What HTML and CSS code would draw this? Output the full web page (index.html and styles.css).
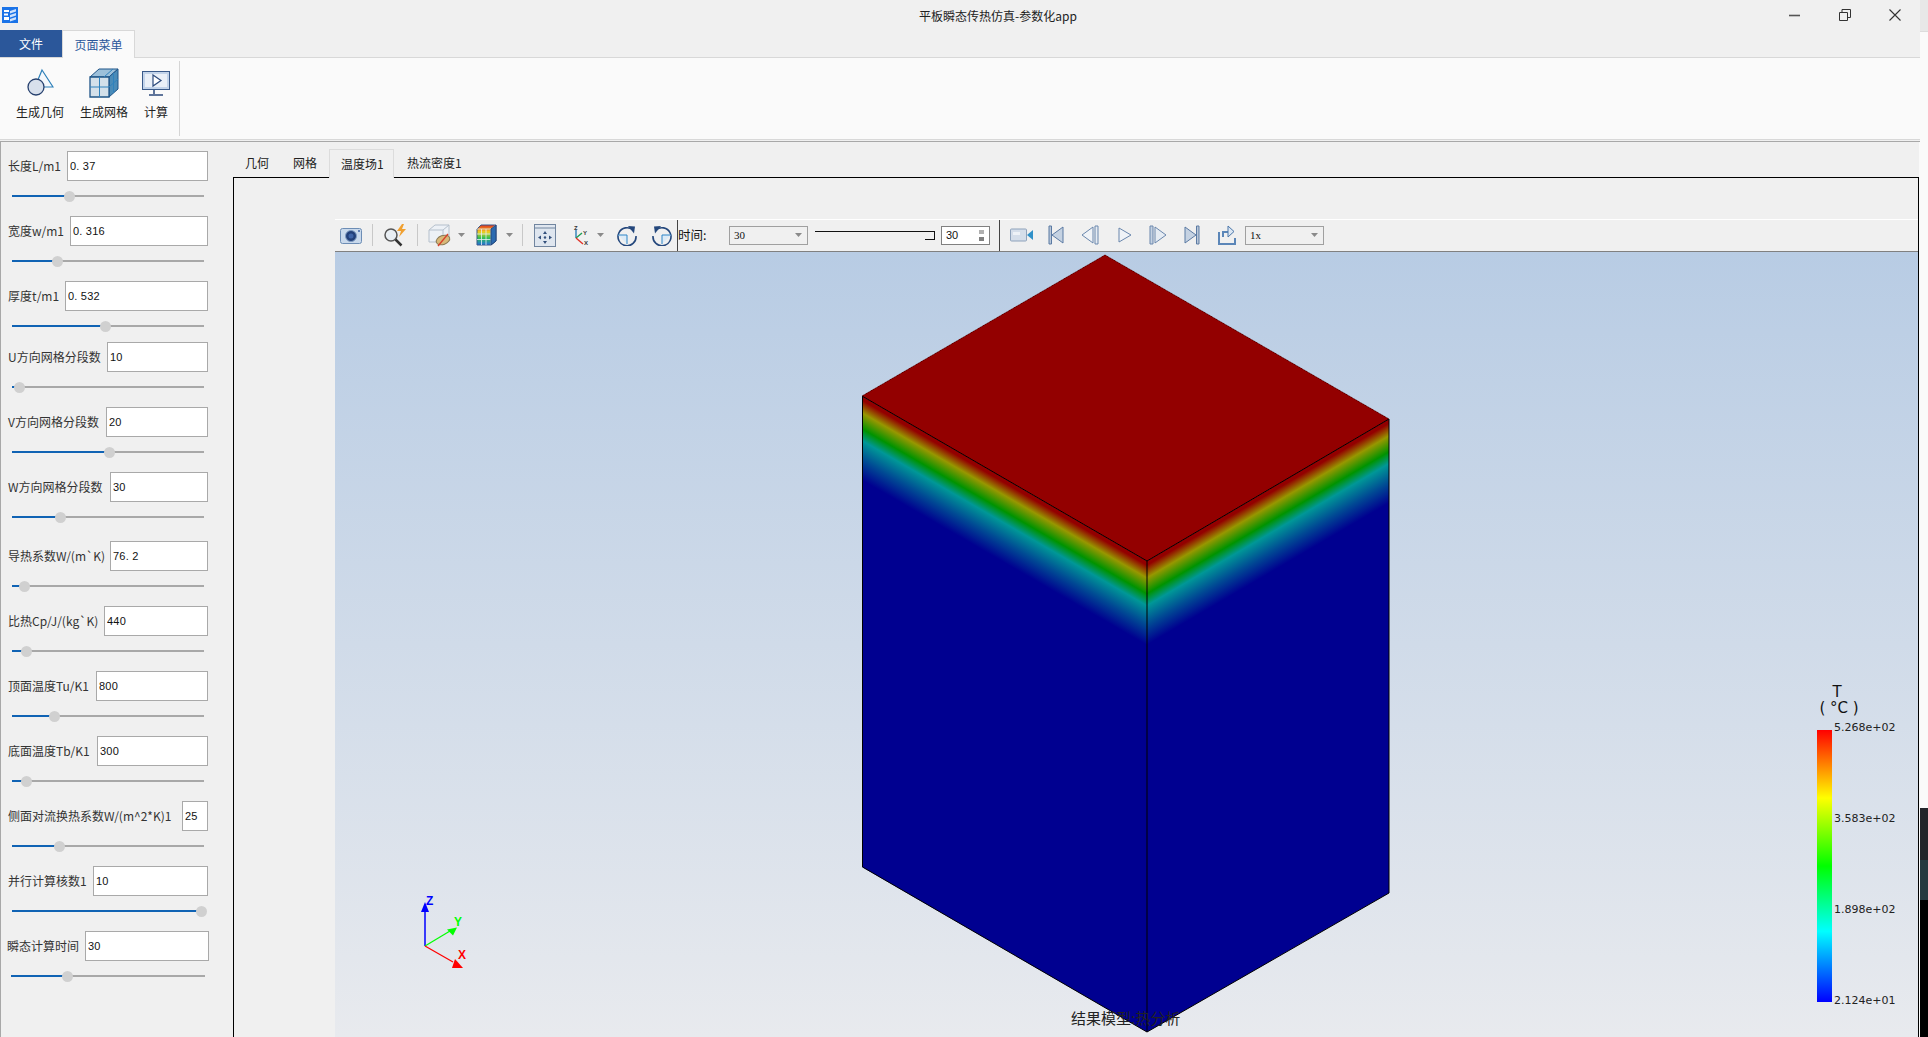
FILE: index.html
```html
<!DOCTYPE html>
<html lang="zh">
<head>
<meta charset="utf-8">
<title>平板瞬态传热仿真-参数化app</title>
<link rel="stylesheet" href="styles.css">
</head>
<body>
<div class="screen">
  <div class="window">
    <header class="titlebar">
      <svg class="app-icon" viewBox="0 0 16 16"><rect width="16" height="16" fill="#1a73e8"/><path d="M2 3h5v2H2zM2 6.500h4v2H2zM2 10h5v3H2z" fill="#fff"/><path d="M8 4l6-2v2.500l-6 2zM8 8l6-2v2.500l-6 2zM8 12l6-2v2.500l-6 2z" fill="#cfe2fb"/></svg>
      <div class="title">平板瞬态传热仿真-参数化app</div>
      <div class="winbtn"><svg viewBox="0 0 12 12" width="12" height="12"><path d="M0 6.500h11" stroke="#555" stroke-width="1.600"/></svg></div>
      <div class="winbtn"><svg viewBox="0 0 12 12" width="12" height="12"><path d="M.5 3.500h8v8h-8zM3 3.500V.5h8.500v8H8.500" fill="none" stroke="#333"/></svg></div>
      <div class="winbtn"><svg viewBox="0 0 12 12" width="12" height="12"><path d="M.5.500l11 11M11.500.5l-11 11" stroke="#333" stroke-width="1.100"/></svg></div>
    </header>

    <nav class="ribbon-tabs">
      <div class="file-tab">文件</div>
      <div class="page-tab">页面菜单</div>
    </nav>

    <section class="ribbon">
      <div class="rbtn">
        <svg class="ricon" width="28" height="30" viewBox="0 0 28 30"><path d="M16 2L27 19H9z" fill="#f4f8fc" stroke="#2c7fb8" stroke-width="1.200"/><circle cx="10" cy="19" r="8" fill="#d8e0ec" stroke="#26406e" stroke-width="1.300"/></svg>
        <span>生成几何</span>
      </div>
      <div class="rbtn">
        <svg class="ricon" width="30" height="30" viewBox="0 0 30 30"><path d="M1 9L10 1h19l-9 8z" fill="#9cc0da" stroke="#1f5588"/><path d="M20 9l9-8v20l-9 8z" fill="#4a8bb8" stroke="#1f5588"/><path d="M1 9h19v20H1z" fill="#d3e0ea" stroke="#1f5588" stroke-width="1.300"/><path d="M10.500 9v20M1 19h19M15 9l9-8M24.500 5v20M20 19l9-8" stroke="#2f82bd" fill="none"/></svg>
        <span>生成网格</span>
      </div>
      <div class="rbtn">
        <svg class="ricon icon-over" width="28" height="30" viewBox="0 0 28 30"><rect x=".5" y="3.500" width="27" height="18" fill="#c3d4ea" stroke="#3a5a8a"/><rect x="3" y="6" width="22" height="13" fill="#eaf0f8"/><path d="M11 7l8 5.500-8 5.500z" fill="#fff" stroke="#2c4a7c" stroke-width="1.200"/><path d="M12 22v4M7 27h14" stroke="#2c4a7c" stroke-width="1.500"/></svg>
        <span>计算</span>
      </div>
      <div class="ribbon-sep"></div>
    </section>

    <div class="workspace">
      <aside class="panel">
        <div class="param">
          <div class="field"><label>长度L/m1</label><input class="w-141" value="0. 37"></div>
          <div class="slider"><div class="fill" style="width:29.7%"></div><div class="knob" style="left:29.7%"></div></div>
        </div>
        <div class="param">
          <div class="field"><label>宽度w/m1</label><input class="w-138" value="0. 316"></div>
          <div class="slider"><div class="fill" style="width:23.4%"></div><div class="knob" style="left:23.4%"></div></div>
        </div>
        <div class="param short">
          <div class="field"><label>厚度t/m1</label><input class="w-143" value="0. 532"></div>
          <div class="slider"><div class="fill" style="width:48.4%"></div><div class="knob" style="left:48.4%"></div></div>
        </div>
        <div class="param">
          <div class="field"><label>U方向网格分段数</label><input class="w-101" value="10"></div>
          <div class="slider"><div class="fill" style="width:3.6%"></div><div class="knob" style="left:3.6%"></div></div>
        </div>
        <div class="param">
          <div class="field"><label>V方向网格分段数</label><input class="w-102" value="20"></div>
          <div class="slider"><div class="fill" style="width:50.5%"></div><div class="knob" style="left:50.5%"></div></div>
        </div>
        <div class="param tall">
          <div class="field"><label>W方向网格分段数</label><input class="w-98" value="30"></div>
          <div class="slider"><div class="fill" style="width:25%"></div><div class="knob" style="left:25%"></div></div>
        </div>
        <div class="param">
          <div class="field"><label>导热系数W/(m`K)</label><input class="w-98" value="76. 2"></div>
          <div class="slider"><div class="fill" style="width:6.3%"></div><div class="knob" style="left:6.3%"></div></div>
        </div>
        <div class="param">
          <div class="field"><label>比热Cp/J/(kg`K)</label><input class="w-104" value="440"></div>
          <div class="slider"><div class="fill" style="width:7.3%"></div><div class="knob" style="left:7.3%"></div></div>
        </div>
        <div class="param">
          <div class="field"><label>顶面温度Tu/K1</label><input class="w-112" value="800"></div>
          <div class="slider"><div class="fill" style="width:21.9%"></div><div class="knob" style="left:21.9%"></div></div>
        </div>
        <div class="param">
          <div class="field"><label>底面温度Tb/K1</label><input class="w-111" value="300"></div>
          <div class="slider"><div class="fill" style="width:7.3%"></div><div class="knob" style="left:7.3%"></div></div>
        </div>
        <div class="param">
          <div class="field"><label>侧面对流换热系数W/(m^2*K)1</label><input class="w-26" value="25"></div>
          <div class="slider"><div class="fill" style="width:24.5%"></div><div class="knob" style="left:24.5%"></div></div>
        </div>
        <div class="param">
          <div class="field"><label>并行计算核数1</label><input class="w-115" value="10"></div>
          <div class="slider"><div class="fill" style="width:98.4%"></div><div class="knob" style="left:98.4%"></div></div>
        </div>
        <div class="param wide">
          <div class="field"><label>瞬态计算时间</label><input class="w-124" value="30"></div>
          <div class="slider"><div class="fill" style="width:28.9%"></div><div class="knob" style="left:28.9%"></div></div>
        </div>
      </aside>

      <main class="main">
        <div class="view-tabs">
          <div class="view-tab">几何</div>
          <div class="view-tab">网格</div>
          <div class="view-tab active">温度场1</div>
          <div class="view-tab">热流密度1</div>
        </div>
        <div class="frame">
          <div class="toolbar">
            <svg class="tool ml-5" width="22" height="18" viewBox="0 0 22 18"><rect x=".5" y="2.500" width="21" height="15" rx="2" fill="#c9d9ec" stroke="#6d8db5"/><circle cx="11" cy="10" r="5.500" fill="#23407a" stroke="#7f9cc2"/><circle cx="11" cy="10" r="2.500" fill="#3f64a8"/><circle cx="19" cy="5" r="1" fill="#3f64a8"/></svg>
            <div class="tsep ml-10"></div>
            <svg class="tool ml-10" width="24" height="24" viewBox="0 0 24 24"><circle cx="8" cy="12" r="6" fill="#e9eef3" stroke="#555" stroke-width="1.500"/><path d="M12.500 16.500l6 6" stroke="#333" stroke-width="2.500"/><path d="M19 1l-5 7h4l-2 6 7-8h-4l2-5z" fill="#f0a030"/></svg>
            <div class="tsep ml-10"></div>
            <svg class="tool ml-10" width="23" height="24" viewBox="0 0 23 24"><path d="M1 7l6-5h14v12l-6 5H1z" fill="#edf1f6" stroke="#b5c0cc"/><path d="M1 7h14v12M15 7l6-5" fill="none" stroke="#b5c0cc"/><ellipse cx="15" cy="17" rx="7" ry="4.500" fill="#d8b878" stroke="#8a7a55" transform="rotate(-20 15 17)"/><path d="M10 23L20 11" stroke="#d8402a" stroke-width="1.300"/></svg>
            <div class="caret ml-7"></div>
            <svg class="tool ml-11" width="21" height="22" viewBox="0 0 21 22"><defs><linearGradient id="rb" x1="0" y1="0" x2="0" y2="1"><stop offset="0" stop-color="#e03020"/><stop offset=".35" stop-color="#f0d020"/><stop offset=".65" stop-color="#30c050"/><stop offset="1" stop-color="#2070e0"/></linearGradient></defs><path d="M1 5l4-4h15v16l-5 4H1z" fill="url(#rb)" stroke="#3a5a8a"/><path d="M1 5h14v16M15 5l5-4M5.500 5v16M10 5v16M1 10h14M1 15.500h14" fill="none" stroke="#e7eef5" stroke-width=".8"/><path d="M15 5l5-4v16l-5 4z" fill="#2a6ab0" stroke="#24477c"/></svg>
            <div class="caret ml-9"></div>
            <div class="tsep ml-9"></div>
            <svg class="tool ml-11" width="22" height="23" viewBox="0 0 22 23"><rect x=".5" y=".5" width="21" height="22" fill="#dfe6ef" stroke="#71859f"/><path d="M1 4h20" stroke="#71859f"/><path d="M11 7l-2 3h4zM11 20l-2-3h4zM4 13.500l3-2v4zM18 13.500l-3-2v4z" fill="#34507c"/><circle cx="11" cy="13.500" r="1.200" fill="#34507c"/></svg>
            <svg class="tool ml-15" width="19" height="22" viewBox="0 0 19 22"><path d="M5 14V5" stroke="#2c7fb8" stroke-width="1.400"/><path d="M5 14l6-5" stroke="#1f9d55" stroke-width="1.400"/><path d="M5 14l7 6" stroke="#e0342a" stroke-width="1.400"/><text class="axis-mini" x="3" y="6">Z</text><text class="axis-mini" x="12" y="11">Y</text><text class="axis-mini" x="13" y="21">X</text></svg>
            <div class="caret ml-7"></div>
            <svg class="tool ml-13" width="20" height="21" viewBox="0 0 20 21"><path d="M16 5A9 9 0 1 0 19 11" fill="none" stroke="#24477c" stroke-width="1.600"/><path d="M11 1l7 .5-1 7z" fill="#24477c"/><path d="M1 10h9v9" fill="#dcebf7" stroke="#2f86c8"/></svg>
            <svg class="tool ml-14" width="21" height="21" viewBox="0 0 21 21"><path d="M5 5a9 9 0 1 1-3 6" fill="none" stroke="#24477c" stroke-width="1.600"/><path d="M10 1l-7 .5 1 7z" fill="#24477c"/><path d="M20 10h-9v9" fill="#dcebf7" stroke="#2f86c8"/></svg>
            <div class="tdiv ml-5"></div>
            <div class="time-label">时间:</div>
            <div class="combo"><span>30</span><i class="caret small"></i></div>
            <div class="time-slider ml-7"><div class="time-knob"></div></div>
            <div class="spin ml-6"><span>30</span><i class="spin-arrows"></i></div>
            <div class="tdiv ml-9"></div>
            <svg class="tool ml-10" width="24" height="16" viewBox="0 0 24 16"><rect x=".5" y="2" width="16" height="12" rx="1" fill="#d5deea" stroke="#8ea2bb"/><rect x="3" y="5" width="7" height="3" fill="#eef2f7"/><path d="M17 8l6-5v10z" fill="#2f90c8"/></svg>
            <svg class="tool ml-14" width="16" height="20" viewBox="0 0 16 20"><path d="M1 1h2.500v18H1z" fill="#b8c6d8" stroke="#5b7aa3"/><path d="M15 2v16L4 10z" fill="#c5d2e2" stroke="#5b7aa3"/></svg>
            <svg class="tool ml-17" width="18" height="20" viewBox="0 0 18 20"><path d="M12 2v16L1 10z" fill="#f0f3f7" stroke="#6a87ad"/><path d="M14 1h3v18h-3z" fill="#e6ecf3" stroke="#6a87ad"/></svg>
            <svg class="tool ml-19" width="14" height="20" viewBox="0 0 14 20"><path d="M1 3v14l12-7z" fill="#f0f3f7" stroke="#6a87ad"/></svg>
            <svg class="tool ml-17" width="18" height="20" viewBox="0 0 18 20"><path d="M1 1h3v18H1z" fill="#c5d2e2" stroke="#6a87ad"/><path d="M6 2v16l11-8z" fill="#e6ecf3" stroke="#6a87ad"/></svg>
            <svg class="tool ml-17" width="16" height="20" viewBox="0 0 16 20"><path d="M1 2v16l11-8z" fill="#c5d2e2" stroke="#5b7aa3"/><path d="M12.500 1H15v18h-2.500z" fill="#b8c6d8" stroke="#5b7aa3"/></svg>
            <svg class="tool ml-17" width="19" height="20" viewBox="0 0 19 20"><path d="M2 7v12h16v-6" fill="none" stroke="#5b86b8" stroke-width="2"/><path d="M6 12V7h6" fill="none" stroke="#5b86b8" stroke-width="2"/><path d="M11 1l6 5.500-6 5.500z" fill="#dce7f3" stroke="#4a76aa"/></svg>
            <div class="combo ml-9"><span>1x</span><i class="caret small"></i></div>
          </div>
          <div class="canvas">
            <svg class="scene" width="1583" height="785" viewBox="335 252 1583 785">
              <defs>
                <linearGradient id="faceL" gradientUnits="userSpaceOnUse" x1="862" y1="396" x2="825.500" y2="459">
                  <stop offset="0" stop-color="#930000"/><stop offset=".05" stop-color="#930000"/><stop offset=".2" stop-color="#979700"/><stop offset=".39" stop-color="#009300"/><stop offset=".53" stop-color="#009797"/><stop offset=".76" stop-color="#004a94"/><stop offset="1" stop-color="#000090"/>
                </linearGradient>
                <linearGradient id="faceR" gradientUnits="userSpaceOnUse" x1="1147" y1="561" x2="1183.600" y2="623.400">
                  <stop offset="0" stop-color="#930000"/><stop offset=".05" stop-color="#930000"/><stop offset=".2" stop-color="#979700"/><stop offset=".39" stop-color="#009300"/><stop offset=".53" stop-color="#009797"/><stop offset=".76" stop-color="#004a94"/><stop offset="1" stop-color="#000090"/>
                </linearGradient>
                <linearGradient id="legendBar" x1="0" y1="0" x2="0" y2="1">
                  <stop offset="0" stop-color="#ff0000"/><stop offset=".25" stop-color="#ffff00"/><stop offset=".5" stop-color="#00ff00"/><stop offset=".74" stop-color="#00ffff"/><stop offset="1" stop-color="#0000ff"/>
                </linearGradient>
              </defs>
              <polygon points="862,396 1147,561 1147,1032 862,867" fill="url(#faceL)"/>
              <polygon points="1147,561 1389,419 1389,893 1147,1032" fill="url(#faceR)"/>
              <polygon points="1105,255 1389,419 1147,561 862,396" fill="#930000" shape-rendering="crispEdges"/>
              <path d="M862 396L1147 561L1389 419M862.500 396V867L1147 1032L1389 893V419M1147 561V1032" fill="none" stroke="#000" stroke-width="1"/>
              <path d="M862 396L1105 255L1389 419" fill="none" stroke="#5a0000" stroke-width=".7"/>

              <text class="caption" x="1071" y="1024">结果模型:热分析</text>

              <path d="M425 946V908" stroke="#0000ff" stroke-width="1.500"/>
              <path d="M425 902l4 10h-8z" fill="#0000ff"/>
              <text class="axis z" x="426" y="905">Z</text>
              <path d="M425 946L450 931" stroke="#00ff00" stroke-width="1.200"/>
              <path d="M457 927.500l-4 8-6-6z" fill="#00ff00"/>
              <text class="axis y" x="454" y="926">Y</text>
              <path d="M425 946L453 962" stroke="#ff0000" stroke-width="1.200"/>
              <path d="M463 968l-11 0 3-9z" fill="#ff0000"/>
              <text class="axis x" x="458" y="959">X</text>

              <text class="legend-t" x="1837" y="697">T</text>
              <text class="legend-u" x="1839" y="713">( °C )</text>
              <rect x="1817" y="730" width="15" height="272" fill="url(#legendBar)"/>
              <text class="legend-v" x="1834" y="731">5.268e+02</text>
              <text class="legend-v" x="1834" y="822">3.583e+02</text>
              <text class="legend-v" x="1834" y="913">1.898e+02</text>
              <text class="legend-v" x="1834" y="1004">2.124e+01</text>
            </svg>
          </div>
        </div>
      </main>
    </div>
  </div>
  <div class="desktop-edge">
    <div class="edge-a"></div>
    <div class="edge-b"></div>
    <div class="edge-c"></div>
    <div class="edge-d"></div>
    <div class="edge-e"></div>
  </div>
</div>
</body>
</html>
```
FILE: styles.css
```css
* { box-sizing: border-box; }
html, body { margin: 0; padding: 0; }
body {
  width: 1928px;
  height: 1037px;
  overflow: hidden;
  font-family: "Noto Sans CJK SC", "Liberation Sans", sans-serif;
  font-size: 12px;
  color: #222;
  background: #f0f0f0;
}
.screen { display: flex; width: 1928px; height: 1037px; overflow: hidden; }
.window { width: 1920px; height: 1037px; display: flex; flex-direction: column; }

/* title bar */
.titlebar { height: 30px; display: flex; align-items: center; background: #f0f0f0; padding-left: 2px; flex: none; }
.app-icon { width: 16px; height: 16px; flex: none; }
.title { flex: 1; text-align: center; padding-left: 208px; font-size: 12px; color: #222; }
.winbtn { width: 50px; height: 30px; display: flex; align-items: center; justify-content: center; flex: none; }

/* ribbon */
.ribbon-tabs { height: 27px; display: flex; flex: none; background: #f0f0f0; }
.file-tab { width: 62px; background: #2b579a; color: #fff; display: flex; align-items: center; justify-content: center; }
.page-tab {
  width: 73px; height: 28px; background: #fafafa; color: #2b579a;
  border: 1px solid #d8d8d8; border-bottom: 0;
  display: flex; align-items: center; justify-content: center;
  position: relative; z-index: 1;
}
.ribbon {
  height: 83px; flex: none; display: flex; gap: 16px; padding: 10px 0 0 16px;
  background: #fafafa; border-top: 1px solid #d8d8d8; border-bottom: 1px solid #d8d8d8;
}
.rbtn { display: flex; flex-direction: column; align-items: center; color: #222; }
.rbtn span { margin-top: 5px; line-height: 17px; white-space: nowrap; }
.ricon { display: block; }
.icon-over { margin: 0 -2px; }
.ribbon-sep { width: 1px; height: 75px; margin: -7px 0 0 -5px; background: #d5d5d5; }

/* workspace */
.workspace {
  flex: 1; min-height: 0; display: flex; margin-top: 1px;
  border-top: 1px solid #a8a8a8; background: #f0f0f0;
}
.panel { width: 233px; flex: none; padding-top: 9px; border-left: 1px solid #a8a8a8; background: #f0f0f0; }
.param { height: 65px; }
.param.short { height: 61px; }
.param.tall { height: 69px; }
.field { display: flex; align-items: center; justify-content: space-between; height: 30px; width: 207px; padding-left: 7px; }
.field label { white-space: nowrap; color: #333; font-size: 12px; padding-bottom: 2px; }
.field input {
  height: 30px; border: 1px solid #a9a9a9; background: #fff; padding: 0 2px;
  font-family: "Liberation Sans", sans-serif; font-size: 11px; letter-spacing: .2px; color: #111; outline: 0; flex: none;
}
.w-141 { width: 141px; } .w-138 { width: 138px; } .w-143 { width: 143px; }
.w-101 { width: 101px; } .w-102 { width: 102px; } .w-98 { width: 98px; }
.w-104 { width: 104px; } .w-112 { width: 112px; } .w-111 { width: 111px; }
.w-26 { width: 26px; } .w-115 { width: 115px; } .w-124 { width: 124px; }
.slider { position: relative; width: 192px; height: 11px; margin: 10px 0 0 11px; }
.slider::before { content: ""; position: absolute; left: 0; right: 0; top: 4px; height: 2px; background: #a8a8a8; }
.fill { position: absolute; left: 0; top: 4px; height: 2px; background: #1063b4; }
.knob { position: absolute; top: 0; width: 11px; height: 11px; margin-left: -5px; border-radius: 50%; background: #d0d0d0; }
.param.wide .field { width: 208px; padding-left: 6px; }
.param.wide .slider { width: 194px; margin-left: 10px; }

/* main */
.main { flex: 1; min-width: 0; display: flex; flex-direction: column; border-right: 1px solid #fafafa; }
.view-tabs { height: 35px; flex: none; display: flex; align-items: flex-end; }
.view-tab { height: 28px; padding: 0 12px 2px; display: flex; align-items: center; color: #222; white-space: nowrap; }
.view-tab.active {
  width: 65px; height: 29px; margin-bottom: -1px; padding: 0 11px 2px;
  border: 1px solid #dcdcdc; border-bottom: 0; background: #f0f0f0;
  position: relative; z-index: 1;
}
.view-tab.active + .view-tab { padding-left: 13px; }
.frame {
  flex: 1; min-height: 0; display: flex; flex-direction: column;
  border: 1px solid #000; border-bottom: 0; padding: 41px 0 0 101px; background: #f0f0f0;
}

/* toolbar */
.toolbar {
  height: 33px; flex: none; display: flex; align-items: center; padding-bottom: 1px;
  background: #f0f0f0; border-top: 1px solid #fff; border-bottom: 1px solid #808080;
}
.tool { display: block; flex: none; }
.tsep { width: 1px; height: 22px; background: #c8c8c8; flex: none; }
.tdiv { width: 1px; height: 31px; background: #444; flex: none; }
.caret { width: 7px; height: 4px; background: #8a8a8a; clip-path: polygon(0 0, 100% 0, 50% 100%); flex: none; }
.caret.small { margin-left: auto; }
.axis-mini { font: bold 6px "Liberation Sans", sans-serif; fill: #333; }
.time-label { width: 51px; flex: none; font-size: 12.5px; color: #111; padding-bottom: 2px; }
.combo {
  width: 79px; height: 19px; flex: none; display: flex; align-items: center; padding: 0 5px 0 4px;
  border: 1px solid #a0a0a0; background: #f0f0f0; font-family: "Liberation Serif", serif; font-size: 11px; color: #111;
}
.time-slider { position: relative; width: 120px; height: 9px; flex: none; border-top: 1px solid #111; }
.time-knob { position: absolute; right: 0; top: 0; width: 10px; height: 8px; border-right: 1px solid #111; border-bottom: 1px solid #111; }
.spin {
  width: 49px; height: 19px; flex: none; display: flex; align-items: center; justify-content: space-between;
  padding: 0 5px 0 4px; border: 1px solid #808080; background: #fff; font-family: "Liberation Sans", sans-serif; font-size: 11px; color: #111;
}
.spin-arrows { width: 5px; height: 11px; background: linear-gradient(#b0b0b0 0 4px, transparent 4px 7px, #808080 7px); }
.ml-5 { margin-left: 5px; } .ml-6 { margin-left: 6px; } .ml-7 { margin-left: 7px; }
.ml-9 { margin-left: 9px; } .ml-10 { margin-left: 10px; } .ml-11 { margin-left: 11px; }
.ml-13 { margin-left: 13px; } .ml-14 { margin-left: 14px; } .ml-15 { margin-left: 15px; }
.ml-17 { margin-left: 17px; } .ml-19 { margin-left: 19px; }

/* 3D view */
.canvas { flex: 1; min-height: 0; background: linear-gradient(#b8cce4, #e8eaee); overflow: hidden; }
.scene { display: block; }
.scene text { font-family: "DejaVu Sans", sans-serif; }
.scene .caption { font-family: "Noto Sans CJK SC", sans-serif; font-size: 15px; fill: #222; }
.scene .axis { font-family: "Liberation Sans", sans-serif; font-size: 12px; font-weight: 700; }
.axis.z { fill: #0000ff; } .axis.y { fill: #00ff00; } .axis.x { fill: #ff0000; }
.legend-t { font-size: 15px; fill: #111; text-anchor: middle; }
.legend-u { font-size: 15px; fill: #111; text-anchor: middle; }
.legend-v { font-size: 11px; fill: #222; }

/* strip of desktop beyond the window */
.desktop-edge { width: 8px; height: 1037px; flex: none; display: flex; flex-direction: column; }
.edge-a { height: 32px; background: #e8e8e8; border-bottom: 1px solid #dcdcdc; }
.edge-b { height: 776px; background: #fafafa; }
.edge-c { height: 52px; background: #23262b; }
.edge-d { height: 40px; background: #263a40; }
.edge-e { flex: 1; background: #000; }
```
